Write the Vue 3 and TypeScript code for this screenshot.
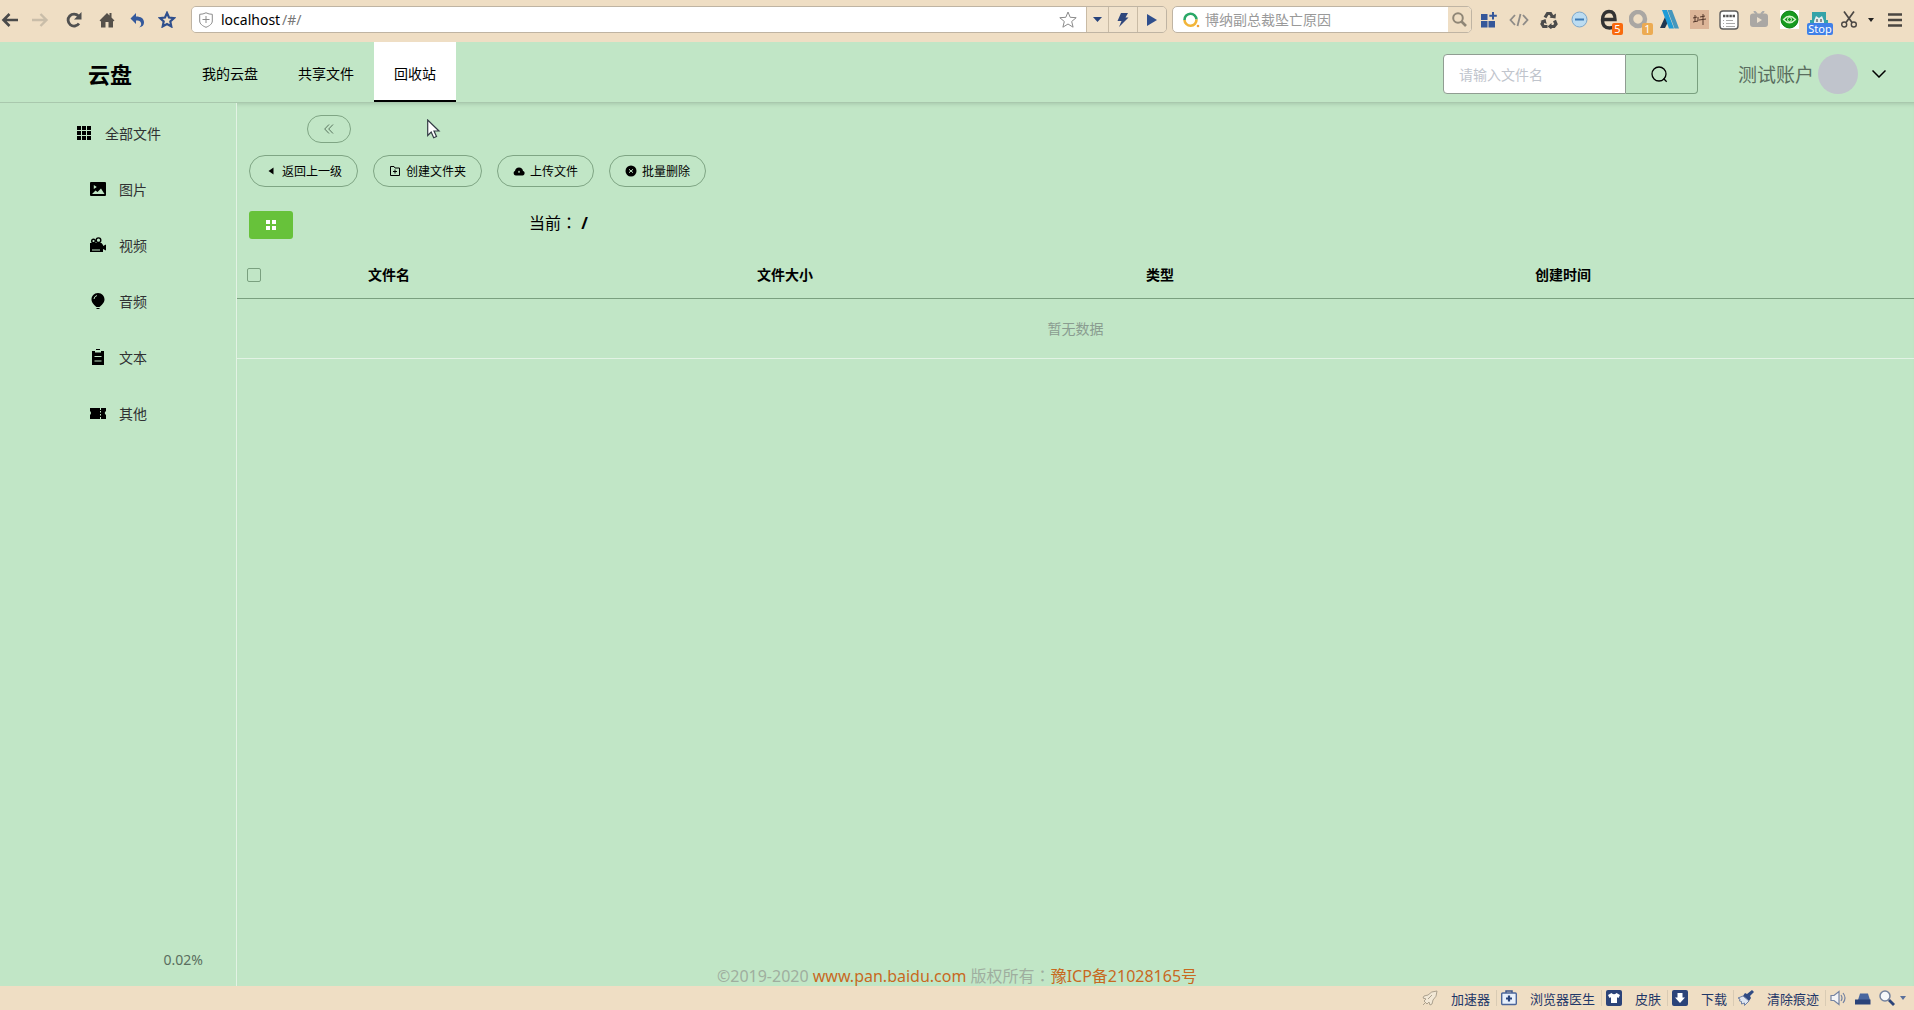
<script setup lang="ts">
import { ref } from 'vue'

interface Column { key: string; label: string }
interface MenuItem { key: string; label: string }

const tabs: string[] = ['我的云盘', '共享文件', '回收站']
const activeTab = ref<string>('回收站')
const keyword = ref<string>('')
const address = ref<string>('localhost')
const allChecked = ref<boolean>(false)

const menu: MenuItem[] = [
  { key: 'image', label: '图片' },
  { key: 'video', label: '视频' },
  { key: 'audio', label: '音频' },
  { key: 'text', label: '文本' },
  { key: 'other', label: '其他' },
]

const columns: Column[] = [
  { key: 'name', label: '文件名' },
  { key: 'size', label: '文件大小' },
  { key: 'type', label: '类型' },
  { key: 'time', label: '创建时间' },
]
</script>

<template>
  <div class="window">
    <div class="toolbar">
      <div class="nav-buttons">
        <button type="button" aria-label="后退"><svg width="18" height="16" viewBox="0 0 18 16"><path d="M8.500 2 2.500 8l6 6M3 8h14" fill="none" stroke="#4a4a4a" stroke-width="2.600" /></svg></button>
        <button type="button" aria-label="前进"><svg width="18" height="16" viewBox="0 0 18 16"><path d="M9.500 2 15.500 8l-6 6M15 8H1" fill="none" stroke="#c9bda9" stroke-width="2.400" /></svg></button>
        <button type="button" class="reload" aria-label="刷新"><svg width="18" height="18" viewBox="0 0 18 18"><path d="M14 12.500A6 6 0 1 1 13.500 5" fill="none" stroke="#505050" stroke-width="2.800" /><path d="M16.500 1v7.500H9z" fill="#505050" /></svg></button>
        <button type="button" aria-label="主页"><svg width="16" height="16" viewBox="0 0 16 16"><path d="M8 1 .5 8.500 2 9.500V15.500h4.500V10h3v5.500H14V9.500l1.500-1-3-3V1h-2v2.500z" fill="#55504a" /></svg></button>
        <button type="button" aria-label="恢复"><svg width="15" height="16" viewBox="0 0 15 16"><path d="M6 1v3.500c5 0 8 2 8 6 0 2.500-1.500 4.500-5 5 2-1.500 2.500-3 2-4.500C10.500 9 9 8.500 6 8.500V12L.5 6.500z" fill="#34599c" /></svg></button>
        <button type="button" aria-label="收藏夹"><svg width="18" height="17" viewBox="0 0 18 17"><path d="m9 2 2 4.500 5 .6-3.700 3.300 1 5L9 13l-4.300 2.400 1-5L2 7.100l5-.6z" fill="none" stroke="#2f4f8d" stroke-width="2.200" /></svg></button>
      </div>

      <div class="address">
        <div class="address-field">
          <svg width="14" height="16" viewBox="0 0 14 16"><path d="M7 .8c2 1 4 1.500 6.300 1.500V9c0 3-3 5-6.300 6.300C3.700 14 .7 12 .7 9V2.300C3 2.300 5 1.800 7 .8zM7 4v7M3.500 7.500h7" fill="none" stroke="#8c8c8c" /></svg>
          <input v-model="address" class="address-input" aria-label="地址栏" />
          <span class="address-path">/#/</span>
          <svg class="address-star" width="18" height="17" viewBox="0 0 18 17"><path d="m9 1 2.200 5.300 6 .4-4.500 3.800 1.400 5.700L9 13l-5.100 3.200 1.400-5.700L.8 6.700l6-.4z" fill="#fff" stroke="#8a8a8a" /></svg>
        </div>
        <button type="button" class="seg seg-small" aria-label="历史"><svg width="9" height="5" viewBox="0 0 9 5"><path d="M0 0h9L4.500 5z" fill="#27437c" /></svg></button>
        <button type="button" class="seg" aria-label="加速"><svg width="12" height="14" viewBox="0 0 12 14"><path d="M4 0h7L8.500 4.500H11.500L2 14l2.500-6H.5z" fill="#2f477c" /></svg></button>
        <button type="button" class="seg" aria-label="转到"><svg width="10" height="12" viewBox="0 0 10 12"><path d="M0 0 10 6 0 12z" fill="#2f4f8d" /></svg></button>
      </div>

      <div class="web-search">
        <svg width="18" height="16" viewBox="0 0 18 16"><path d="M1.500 8A6 6 0 0 1 13.500 7.500" fill="none" stroke="#2aa867" stroke-width="2.600" /><path d="M13.500 7.500A6 6 0 0 1 1.500 8" fill="none" stroke="#f2b53a" stroke-width="2.600" /><circle cx="15" cy="14" r="1.300" fill="#f2a23a" /></svg>
        <input class="web-search-input" placeholder="博纳副总裁坠亡原因" aria-label="网页搜索" />
        <button type="button" class="web-search-go" aria-label="搜索"><svg width="15" height="15" viewBox="0 0 15 15"><circle cx="6" cy="6" r="4.800" fill="none" stroke="#8f8676" stroke-width="2" /><path d="m9.500 9.500 4.500 4.500" stroke="#8f8676" stroke-width="2.600" /></svg></button>
      </div>

      <div class="extensions">
        <button type="button" aria-label="扩展"><svg width="16" height="16" viewBox="0 0 16 16"><path d="M0 2h6.500v6H0zM0 9h6.500v6.500H0zM7.500 9H14v6.500H7.500z" fill="#35579a" /><path d="M12 0v7.500M8.300 3.700h7.500" stroke="#35579a" stroke-width="2" /></svg></button>
        <button type="button" aria-label="源代码"><svg width="20" height="14" viewBox="0 0 20 14"><path d="M6 2 1.500 7 6 12M14 2l4.500 5-4.500 5M11.500 1l-3 12" fill="none" stroke="#8e8b87" stroke-width="1.800" /></svg></button>
        <button type="button" aria-label="回收"><svg width="18" height="18" viewBox="0 0 18 18"><path d="M5 6.500 7.500 2.500h3L12.500 6M14.500 9.500l1.500 3.500-2 2.500h-3M7.500 15.500H3.500L2 13l1.500-3" fill="none" stroke="#4b4b4b" stroke-width="3.200" /><path d="m9.500 6.500 6 1 .5-5zM11.500 12v6.500L7.500 15.500zM.3 10l5.200-2 1.200 5z" fill="#4b4b4b" /></svg></button>
        <button type="button" aria-label="屏蔽"><svg width="17" height="17" viewBox="0 0 17 17"><circle cx="8.500" cy="8.500" r="7.500" fill="#bcdcf1" stroke="#7da7ca" /><path d="M4 7.500h9v2H4z" fill="#3c7ab5" /></svg></button>
        <button type="button" aria-label="浏览器内核"><svg width="20" height="22" viewBox="0 0 20 22"><path d="M3 10.500h13C16 5 14 2.500 10 2.500S3.500 6 3.500 11s2.500 8 7 8c2 0 3.500-.5 5-1.500" fill="none" stroke="#333" stroke-width="3.400" /></svg><span class="badge badge-orange">5</span></button>
        <button type="button" aria-label="通知"><svg width="20" height="20" viewBox="0 0 20 20"><circle cx="9" cy="9" r="7" fill="none" stroke="#aaa7a3" stroke-width="4.500" /></svg><span class="badge badge-amber">1</span></button>
        <button type="button" aria-label="翻译"><svg width="19" height="19" viewBox="0 0 19 19"><path d="M0 18 5 7l3 5-3 6z" fill="#21364f" /><path d="M2 0h5l7 18.500H9z" fill="#1d9bd7" /><path d="M7.500 0h4.500L19 18.500h-4.500z" fill="#4697bd" /></svg></button>
        <button type="button" aria-label="书法"><svg width="19" height="19" viewBox="0 0 19 19"><path d="M0 0h19v19H0z" fill="#dcb598" /><path d="M3 8l4-1M5 5v7M3 12l5-1M10 7l5-1M9 10l7-1M13 4v11M8 7v4" fill="none" stroke="#54382c" /></svg></button>
        <button type="button" aria-label="JSON"><svg width="20" height="20" viewBox="0 0 20 20"><rect x="1" y="1" width="18" height="18" rx="3" fill="#fff" stroke="#5e5e5e" stroke-width="1.400" /><path d="M4 6h12" stroke="#555" stroke-width="2.600" stroke-dasharray="2.400 .8" /><path d="M4 10.500h1m2 0h7M4 13.500h1m2 0h9M4 16.500h1m2 0h9" stroke="#aaa" /></svg></button>
        <button type="button" aria-label="视频"><svg width="20" height="17" viewBox="0 0 20 17"><path d="m5 0 3 3M15 0l-3 3" stroke="#aaa" stroke-width="2" /><rect x="1" y="2.500" width="18" height="13.500" rx="3" fill="#aaa7a4" /><path d="m8 6 5 3-5 3z" fill="#ece0ce" /></svg></button>
        <button type="button" aria-label="护眼"><svg width="19" height="19" viewBox="0 0 19 19"><path d="M0 0h19v19H0z" fill="#fff" /><circle cx="9.500" cy="9.500" r="8.500" fill="#169b20" stroke="#087d12" /><path d="M3.500 9.500q6-6.500 12 0-6 6.500-12 0z" fill="none" stroke="#d8f4cf" stroke-width="1.300" /><circle cx="9.500" cy="9.500" r="2" fill="none" stroke="#d8f4cf" /></svg></button>
        <button type="button" aria-label="助手"><svg width="18" height="18" viewBox="0 0 18 18"><path d="M2 1h14v17H2z" fill="#35a3a8" /><path d="M0 9h18v8H0z" fill="#35a3a8" /><path d="m4 10 2-5 3 2 3-2 2 5v5H4z" fill="#e6eeee" /><path d="M7 8v3M11 8v3" stroke="#333" /></svg><span class="badge badge-stop">Stop</span></button>
        <button type="button" aria-label="截图"><svg width="16" height="17" viewBox="0 0 16 17"><path d="m3 .5 8 11M13 .5l-8 11" stroke="#4b4744" stroke-width="1.700" /><circle cx="3.200" cy="13.500" r="2.500" fill="none" stroke="#4b4744" stroke-width="1.400" /><circle cx="12.800" cy="13.500" r="2.500" fill="none" stroke="#4b4744" stroke-width="1.400" /></svg></button>
        <button type="button" class="ext-caret" aria-label="更多"><svg width="6" height="4" viewBox="0 0 6 4"><path d="M0 0h6L3 4z" fill="#222" /></svg></button>
        <button type="button" class="ext-menu" aria-label="菜单"><svg width="14" height="14" viewBox="0 0 14 14"><path d="M0 1.500h14M0 7h14M0 12.500h14" stroke="#4a4641" stroke-width="2.600" /></svg></button>
      </div>
    </div>

    <header class="header">
      <h1 class="logo">云盘</h1>
      <nav class="tabs">
        <a v-for="tab in tabs" :key="tab" href="#/" class="tab" :class="{ active: tab === activeTab }" @click.prevent="activeTab = tab">{{ tab }}</a>
      </nav>
      <form class="file-search" @submit.prevent>
        <input v-model="keyword" class="file-search-input" placeholder="请输入文件名" aria-label="文件名" />
        <button type="submit" class="file-search-go" aria-label="搜索文件"><svg width="17" height="17" viewBox="0 0 17 17"><circle cx="8" cy="8" r="7" fill="none" stroke="#000" stroke-width="1.300" /><path d="m12.500 12.500 3.200 3.200" stroke="#000" stroke-width="1.300" /></svg></button>
      </form>
      <button type="button" class="account">
        <span>测试账户</span>
        <span class="avatar"></span>
        <svg width="14" height="8" viewBox="0 0 14 8"><path d="m.5.500 6.500 6.500L13.500.500" fill="none" stroke="#000" stroke-width="1.500" /></svg>
      </button>
    </header>

    <div class="body">
      <aside class="sidebar">
        <a href="#/" class="menu-item menu-root">
          <svg width="14" height="14" viewBox="0 0 14 14"><path d="M0 0h4v4H0zM5 0h4v4H5zM10 0h4v4h-4zM0 5h4v4H0zM5 5h4v4H5zM10 5h4v4h-4zM0 10h4v4H0zM5 10h4v4H5zM10 10h4v4h-4z" /></svg>
          <span>全部文件</span>
        </a>
        <a v-for="item in menu" :key="item.key" href="#/" class="menu-item menu-sub">
          <svg v-if="item.key === 'image'" width="16" height="16" viewBox="0 0 16 16"><path fill-rule="evenodd" d="M1 1h14q1 0 1 1v12q0 1-1 1H1q-1 0-1-1V2q0-1 1-1zm2.800 3v4l3-2zM2 13h12.500L11 7.500 7.500 11 5.500 9.500z" /></svg>
          <svg v-else-if="item.key === 'video'" width="16" height="16" viewBox="0 0 16 16"><circle cx="3.500" cy="4" r="1.800" fill="none" stroke="#000" stroke-width="1.400" /><circle cx="8.500" cy="3.200" r="2.300" fill="none" stroke="#000" stroke-width="1.400" /><path fill-rule="evenodd" d="M0 6h11.500l1.500 2v1l3-1.500v6L13 12v3H0zm2 6.500v1h8v-1z" /></svg>
          <svg v-else-if="item.key === 'audio'" width="16" height="16" viewBox="0 0 16 16"><path d="M8 0c4 0 6.500 3 6.500 6.500S11 12.500 9.500 14h-3C5 12.500 1.500 10 1.500 6.500S4 0 8 0zM6.500 15h3v1h-3z" /><path d="M4 6q.3-2.800 3-3.500" fill="none" stroke="#c1e6c6" /></svg>
          <svg v-else-if="item.key === 'text'" width="16" height="16" viewBox="0 0 16 16"><path fill-rule="evenodd" d="M6 0h4v1H6zM2 2h3v1.500h6V2h3v14H2zm2.500 5v1h7V7zm0 4.500v1h7v-1z" /></svg>
          <svg v-else width="16" height="16" viewBox="0 0 16 16"><path d="M0 3h10v2h1V3h5v3q-2.500 2 0 4v4h-5v-2h-1v2H0v-4q2-2 0-4z" /><path d="M10.500 6v1.500M10.500 9v1.500" stroke="#c1e6c6" /></svg>
          <span>{{ item.label }}</span>
        </a>
        <div class="usage">0.02%</div>
      </aside>

      <main class="main">
        <button type="button" class="pill collapse" aria-label="收起"><svg width="10" height="10" viewBox="0 0 10 10"><path d="M5 .5.700 5 5 9.500M9 .5 4.700 5 9 9.500" fill="none" stroke="#4c6650" stroke-width=".9" /></svg></button>
        <div class="actions">
          <button type="button" class="pill"><svg width="12" height="12" viewBox="0 0 12 12"><path d="M8.500 2.500v7L3.500 6z" /></svg>返回上一级</button>
          <button type="button" class="pill"><svg width="12" height="12" viewBox="0 0 12 12"><path d="M1.500 10.500v-9h3.500L6 3h4.500v7.500zM6 4.500v4M4 6.500h4" fill="none" stroke="#000" /></svg>创建文件夹</button>
          <button type="button" class="pill"><svg width="12" height="12" viewBox="0 0 12 12"><path fill-rule="evenodd" d="M3 10.500C0 10.500 0 6.500 2 6q.5-3.500 4-3.500T10 6c2.500.5 2 4.500-.5 4.500zM6 5.500 5 7h.5v1h1V7H7z" /></svg>上传文件</button>
          <button type="button" class="pill"><svg width="12" height="12" viewBox="0 0 12 12"><circle cx="6" cy="6" r="5.500" /><path d="m4 4.300 4 3.400M8 4.300 4 7.700" stroke="#c1e6c6" /></svg>批量删除</button>
        </div>
        <div class="path-row">
          <button type="button" class="grid-toggle" aria-label="网格视图"><svg width="10" height="10" viewBox="0 0 10 10"><path d="M0 0h4v4H0zM6 0h4v4H6zM0 6h4v4H0zM6 6h4v4H6z" fill="#fff" /></svg></button>
          <p class="path">当前<span class="colon">：</span> <b>/</b></p>
        </div>
        <table class="files">
          <thead>
            <tr>
              <th class="check-cell"><input v-model="allChecked" type="checkbox" class="check" aria-label="全选" /></th>
              <th v-for="col in columns" :key="col.key">{{ col.label }}</th>
            </tr>
          </thead>
          <tbody>
            <tr><td colspan="5" class="empty">暂无数据</td></tr>
          </tbody>
        </table>
      </main>

      <footer class="copyright">©2019-2020 <a href="#/">www.pan.baidu.com</a> 版权所有<span class="colon">：</span><a href="#/">豫ICP备21028165号</a></footer>
    </div>

    <div class="statusbar">
      <button type="button" class="status-item"><svg width="16" height="16" viewBox="0 0 16 16"><path d="M15 1Q9 1 6 5L2 6 1 8l3 1-2 2 3 3 2-2 1 3 2-1 1-4q4-3 4-9zM1 15l3-3M6 9l4-4" fill="#f2e8d6" stroke="#aca18e" /></svg>加速器</button>
      <button type="button" class="status-item"><svg width="16" height="16" viewBox="0 0 16 16"><path d="M5 3V1h6v2" fill="none" stroke="#3d568a" stroke-width="1.500" /><rect x=".7" y="3" width="14.600" height="11.500" rx="1" fill="#e8f0fb" stroke="#4b6599" stroke-width="1.400" /><path d="M8 5.500v6M5 8.500h6" stroke="#27437c" stroke-width="2.200" /></svg>浏览器医生</button>
      <button type="button" class="status-item"><svg width="16" height="16" viewBox="0 0 16 16"><rect width="16" height="16" rx="2" fill="#2b4379" /><path d="M5.500 3 2 5l1.500 3 1.500-.8V13h6V7.200l1.500.8L14 5l-3.500-2Q8 5.500 5.500 3z" fill="#fff" /></svg>皮肤</button>
      <button type="button" class="status-item"><svg width="16" height="16" viewBox="0 0 16 16"><rect width="16" height="16" rx="2" fill="#2b4379" /><path d="M5.500 3h5v4.500H13L8 13 3 7.500h2.500z" fill="#fff" /></svg>下载</button>
      <button type="button" class="status-item"><svg width="16" height="16" viewBox="0 0 16 16"><path d="M14 0 9 4 7 3 5 6l6 5 2-3-1-2 4-4z" fill="#2f4a83" /><path d="M5 6 0 8l2 1-.5 2 2 .5V14l3-1v2.500L11 11z" fill="#dfe6f1" stroke="#6f80a4" /></svg>清除痕迹</button>
      <button type="button" aria-label="音量"><svg width="16" height="16" viewBox="0 0 16 16"><path d="M1 5.500h3L9 1.500v13l-5-4H1z" fill="#f4f4f6" stroke="#7382a2" stroke-width="1.200" /><path d="M11 5q2 3 0 6M13 3q4 5 0 10" fill="none" stroke="#7382a2" stroke-width="1.200" /></svg></button>
      <button type="button" aria-label="窗口"><svg width="17" height="16" viewBox="0 0 17 16"><path d="M4 10 6 3.500h8L16 10z" fill="#48669f" /><path d="M1 9.500h15.500v5H1z" fill="#2b4379" /></svg></button>
      <button type="button" class="zoom-group" aria-label="缩放"><svg width="16" height="16" viewBox="0 0 16 16"><circle cx="6" cy="6" r="5" fill="#f6f8fb" stroke="#75839e" stroke-width="1.500" /><path d="m10 10 5 5" stroke="#2b4379" stroke-width="2.800" /></svg><svg width="6" height="4" viewBox="0 0 6 4"><path d="M0 0h6L3 4z" fill="#5a6f9b" /></svg></button>
    </div>

    <svg class="pointer" width="14" height="20" viewBox="0 0 14 20"><path d="M.7 1v15.500l3.500-3.500 2.500 5.700 2.800-1.200L7 12h5z" fill="#fff" stroke="#333b45" stroke-width="1.200" /></svg>
  </div>
</template>

<style>
body {
  margin: 0;
  background: #c1e6c6;
}
</style>

<style scoped>
.window {
  position: relative;
  display: flex;
  flex-direction: column;
  min-height: 100vh;
  background: #c1e6c6;
  color: #000;
  font-family: "Noto Sans", "Noto Sans CJK SC", sans-serif;
  font-size: 14px;
}
.window *, .window { box-sizing: border-box; }
button, input { font: inherit; color: inherit; }
button {
  display: flex;
  align-items: center;
  justify-content: center;
  padding: 0;
  border: 0;
  background: none;
}
input { min-width: 0; padding: 0; border: 0; outline: 0; background: none; }
a { text-decoration: none; color: inherit; }
svg { flex: none; display: block; }
.colon { font-family: "Noto Sans CJK TC", sans-serif; }

/* browser chrome */
.toolbar {
  display: flex;
  align-items: center;
  height: 42px;
  padding-bottom: 3px;
  background: #efdec4;
}
.nav-buttons { display: flex; margin: 0 9px 0 -5px; }
.nav-buttons button { width: 30px; height: 30px; }
.nav-buttons .reload { width: 37px; }
.address, .web-search {
  display: flex;
  height: 27px;
  border: 1px solid #bfb4a3;
  border-radius: 5px;
  overflow: hidden;
}
.address { flex: 1; margin-right: 5px; }
.address-field {
  flex: 1;
  display: flex;
  align-items: center;
  padding: 0 9px 0 7px;
  background: #fff;
}
.address-input { width: 61px; margin-left: 8px; }
.address-path { color: #777; }
.address-star { margin-left: auto; }
.seg { width: 29px; border-left: 1px solid #c9bba5; background: #f1e3cd; }
.seg-small { width: 22px; }
.web-search { width: 300px; background: #fff; align-items: center; padding-left: 10px; }
.web-search-input { flex: 1; margin-left: 4px; }
.web-search-input::placeholder { color: #999; opacity: 1; }
.web-search-go { width: 23px; height: 27px; background: #efdec4; }
.extensions { display: flex; margin: 0 8px 0 2px; }
.extensions button { position: relative; width: 30px; height: 30px; }
.extensions .ext-caret { width: 13px; }
.extensions .ext-menu { width: 29px; padding-left: 7px; }
.badge {
  position: absolute;
  right: 1px;
  bottom: 0;
  width: 11px;
  height: 12px;
  border-radius: 2px;
  color: #fff;
  font-size: 11px;
  line-height: 12px;
  text-align: center;
}
.badge-orange { background: #f96a0e; }
.badge-amber { background: #ecab52; }
.badge-stop { width: 26px; background: #3f80e8; }

/* application header */
.header {
  position: relative;
  display: flex;
  align-items: center;
  height: 61px;
  padding: 0 28px 0 88px;
  border-bottom: 1px solid #a9c8ad;
}
.logo, .file-search, .account { margin-top: 4px; }
.logo { width: 94px; margin-bottom: 0; font-size: 22px; line-height: 32px; font-weight: 700; }
.tabs { display: flex; align-self: stretch; }
.tab { padding: 0 20px; border-bottom: 2px solid transparent; line-height: 64px; height: 60px; }
.tab.active { background: #fff; border-bottom-color: #000; }
.file-search { display: flex; width: 255px; height: 40px; margin-left: auto; margin-right: 40px; }
.file-search-input {
  flex: 1;
  padding: 0 15px;
  border: 1px solid #909d92;
  border-radius: 4px 0 0 4px;
  background: #fff;
}
.file-search-input::placeholder { color: #c0c4cc; opacity: 1; }
.file-search-go {
  width: 72px;
  padding-right: 4px;
  border: 1px solid #7aa07f;
  border-left: 0;
  border-radius: 0 4px 4px 0;
}
.account { color: #5a6e5f; font-size: 19px; }
.avatar { width: 40px; height: 40px; margin: 0 14px 0 4px; border-radius: 50%; background: #c0c4cc; }

/* sidebar and content */
.body { position: relative; flex: 1; display: flex; }
.sidebar {
  display: flex;
  flex-direction: column;
  width: 237px;
  padding: 2px 0 16px;
  border-right: 1px solid #e2f3e4;
}
.menu-item { display: flex; align-items: center; height: 56px; color: #303133; }
.menu-root { gap: 14px; padding-left: 77px; }
.menu-sub { gap: 13px; padding-left: 90px; }
.menu-item svg { fill: #000; }
.usage { margin: auto 33px 0 auto; color: #5a6e5f; line-height: 20px; }
.main { flex: 1; min-width: 0; padding-top: 12px; box-shadow: inset 0 4px 4px -3px #a6c5aa; }
.pill {
  height: 32px;
  padding: 0 15px;
  gap: 5px;
  border: 1px solid #7fa584;
  border-radius: 16px;
  font-size: 12px;
}
.collapse { width: 44px; height: 28px; margin-left: 70px; border-radius: 14px; }
.actions { display: flex; gap: 15px; margin: 12px 12px 0; }
.path-row { display: flex; align-items: center; height: 28px; margin: 24px 12px 12px; }
.grid-toggle { width: 44px; height: 28px; border-radius: 3px; background: #67c23a; }
.path { margin: 0 0 6px 236px; font-size: 16px; line-height: 24px; }
.files { width: 100%; border-collapse: collapse; table-layout: fixed; }
.files th {
  height: 47px;
  padding: 0 10px;
  border-bottom: 1px solid #7aa07f;
  text-align: left;
  font-weight: 700;
}
.files .check-cell { width: 121px; padding-top: 2px; }
.check {
  display: block;
  width: 14px;
  height: 14px;
  margin: 0;
  appearance: none;
  border: 1px solid #7aa07f;
  border-radius: 2px;
}
.check:checked { background: #67c23a; }
.files .empty {
  height: 60px;
  padding: 0;
  border-bottom: 1px solid #e2f3e4;
  text-align: center;
  color: #8a9c90;
}
.copyright {
  position: absolute;
  left: 0;
  right: 0;
  bottom: 0;
  font-size: 16px;
  line-height: 20px;
  text-align: center;
  color: #9fae9f;
}
.copyright a { color: #c8691f; }

/* status bar */
.statusbar {
  display: flex;
  align-items: center;
  justify-content: flex-end;
  gap: 8px;
  height: 24px;
  padding-right: 8px;
  background: #efdec4;
  color: #1f3768;
  font-size: 13px;
}
.status-item { gap: 13px; height: 16px; margin-right: -4px; padding-right: 6px; border-right: 1px solid #d9cbb4; }
.zoom-group { gap: 5px; }
.pointer { position: absolute; left: 427px; top: 119px; }
</style>
